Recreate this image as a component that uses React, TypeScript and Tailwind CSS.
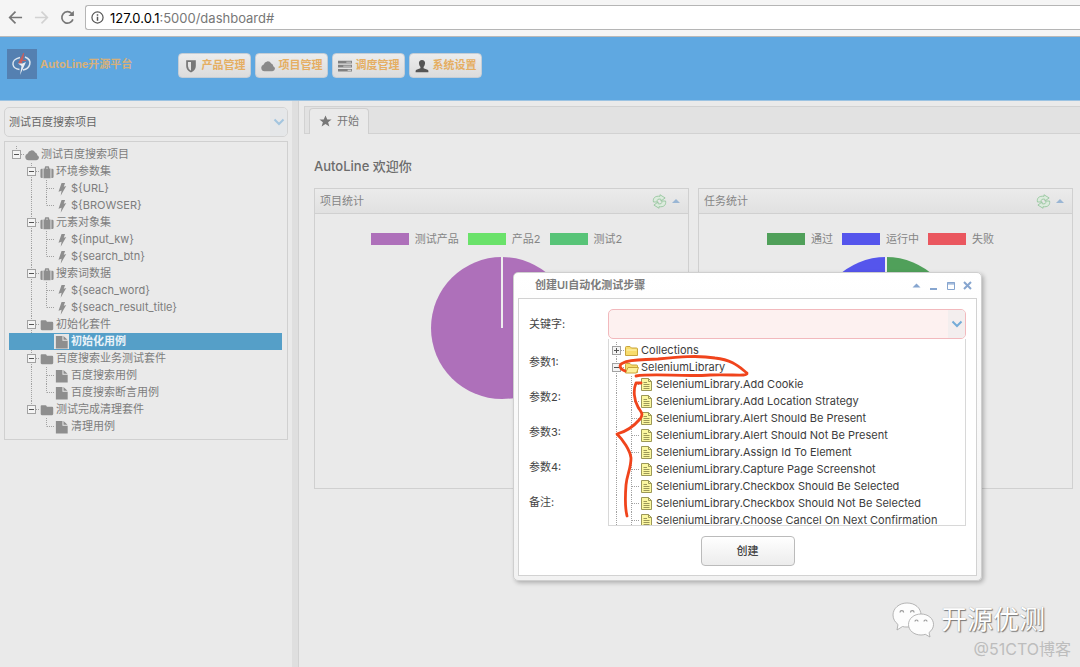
import React from "react";

type IconName = "cloud" | "case" | "bolt" | "folder" | "file" | "shield" | "tasks" | "user" | "star";

const glyphs: Record<IconName, React.ReactNode> = {
  cloud: <path d="M4 14a4 4 0 0 1-.9-7.8A4.7 4.7 0 0 1 11.7 5 3.2 3.2 0 0 1 14 8.200 3 3 0 0 1 13 14z" />,
  case: (
    <>
      <path d="M4 4h1.500V2.500Q5.500 1.500 6.500 1.500h3Q10.500 1.500 10.500 2.500V4H12v11H4zM7 3v1h2V3z" fillRule="evenodd" />
      <path d="M3 4.200v10.600H2Q.500 14.800.500 13.300V5.700Q.500 4.200 2 4.200zM13 4.200v10.600h1Q15.500 14.800 15.500 13.300V5.700Q15.500 4.200 14 4.200z" />
    </>
  ),
  bolt: <path d="M7.500 1h4L10 5.500l2.800-.8L6.500 15.700l1-5.600-3.500 1z" />,
  folder: <path d="M.800 3.500Q.800 2.500 1.800 2.500h4.400q1 0 1.300 1l.3.900h6q1.300 0 1.300 1.300v7q0 1.300-1.300 1.300H2.100Q.800 14 .800 12.700z" />,
  file: <path d="M1 1H8.500v5.500h6V15.500H1zM9.700 1l4.600 4.400H9.700z" />,
  shield: <path d="M2.500 1.500h11V8q0 4.700-5.500 7.500Q2.500 12.700 2.500 8zm2 1.800V8q0 3.300 3.500 5.300V3.300z" fillRule="evenodd" />,
  tasks: (
    <path
      d="M0 2h16v3H0zM0 6.700h16v3H0zM0 11.400h16v3H0zM9.500 3v1h5.500V3zM6 7.700v1h9v-1zM11 12.400v1h4v-1z"
      fillRule="evenodd"
    />
  ),
  user: <path d="M8 1c2.300 0 3.600 1.500 3.500 3.700C11.400 7 10.500 8.300 9.800 9v1.500l4.500 1.800q1 .4 1 1.400V15H.700v-1.300q0-1 1-1.400l4.500-1.800V9C5.500 8.300 4.600 7 4.500 4.700 4.400 2.500 5.700 1 8 1z" />,
  star: <path d="M8 .500l2.200 5h5.300l-4.300 3.300 1.600 5.400L8 11l-4.800 3.200 1.600-5.400L.500 5.500h5.300z" />,
};

function Icon({ name, className = "" }: { name: IconName; className?: string }) {
  return (
    <svg viewBox="0 0 16 16" fill="currentColor" aria-hidden="true" className={`shrink-0 ${className}`}>
      {glyphs[name]}
    </svg>
  );
}

type LineKind = "none" | "line" | "tee" | "end" | "open" | "openEnd" | "openRoot" | "closed";

function Cell({ kind }: { kind: LineKind }) {
  const box = kind === "open" || kind === "openEnd" || kind === "openRoot" || kind === "closed";
  const below = kind === "line" || kind === "tee" || kind === "open" || kind === "closed";
  return (
    <svg viewBox="0 0 15 17" aria-hidden="true" className="h-[17px] w-[15px] shrink-0 text-[#a2a2a2]">
      {kind !== "none" && (
        <g stroke="currentColor" strokeDasharray="1 1" fill="none">
          <path d={below ? "M7.500 0V17" : "M7.500 0V8.500"} />
          {kind !== "line" && <path d="M8 8.500H15" />}
        </g>
      )}
      {box && (
        <g stroke="currentColor" fill="#f4f4f4">
          <rect x="3.500" y="4.500" width="8" height="8" />
          <path d="M5 8.500H10" stroke="#555" />
          {kind === "closed" && <path d="M7.500 6V11" stroke="#555" />}
        </g>
      )}
    </svg>
  );
}

type Row = { cells: LineKind[]; icon: IconName; text: string; selected?: boolean };

const projectRows: Row[] = [
  { cells: ["openRoot"], icon: "cloud", text: "测试百度搜索项目" },
  { cells: ["none", "open"], icon: "case", text: "环境参数集" },
  { cells: ["none", "line", "tee"], icon: "bolt", text: "${URL}" },
  { cells: ["none", "line", "end"], icon: "bolt", text: "${BROWSER}" },
  { cells: ["none", "open"], icon: "case", text: "元素对象集" },
  { cells: ["none", "line", "tee"], icon: "bolt", text: "${input_kw}" },
  { cells: ["none", "line", "end"], icon: "bolt", text: "${search_btn}" },
  { cells: ["none", "open"], icon: "case", text: "搜索词数据" },
  { cells: ["none", "line", "tee"], icon: "bolt", text: "${seach_word}" },
  { cells: ["none", "line", "end"], icon: "bolt", text: "${seach_result_title}" },
  { cells: ["none", "open"], icon: "folder", text: "初始化套件" },
  { cells: ["none", "line", "end"], icon: "file", text: "初始化用例", selected: true },
  { cells: ["none", "open"], icon: "folder", text: "百度搜索业务测试套件" },
  { cells: ["none", "line", "tee"], icon: "file", text: "百度搜索用例" },
  { cells: ["none", "line", "end"], icon: "file", text: "百度搜索断言用例" },
  { cells: ["none", "openEnd"], icon: "folder", text: "测试完成清理套件" },
  { cells: ["none", "none", "end"], icon: "file", text: "清理用例" },
];

const keywords = [
  "Add Cookie",
  "Add Location Strategy",
  "Alert Should Be Present",
  "Alert Should Not Be Present",
  "Assign Id To Element",
  "Capture Page Screenshot",
  "Checkbox Should Be Selected",
  "Checkbox Should Not Be Selected",
  "Choose Cancel On Next Confirmation",
];

function Chevron({ className = "" }: { className?: string }) {
  return (
    <svg viewBox="0 0 12 12" fill="none" stroke="currentColor" strokeWidth="2" aria-hidden="true" className={`size-3 ${className}`}>
      <path d="M1.500 3.500L6 8l4.500-4.500" />
    </svg>
  );
}

function BrowserBar() {
  return (
    <div className="flex h-[37px] items-center border-b border-[#b9b9b9] bg-[#f5f5f5] pb-px pl-2">
      <div className="flex items-center gap-[11px]">
        <button aria-label="Back" className="text-[#777]">
          <svg viewBox="0 0 16 16" fill="none" stroke="currentColor" strokeWidth="1.800" className="size-[15px]">
            <path d="M15 8H2M8 1.800L1.800 8 8 14.200" />
          </svg>
        </button>
        <button aria-label="Forward" className="text-[#d2d2d2]">
          <svg viewBox="0 0 16 16" fill="none" stroke="currentColor" strokeWidth="1.800" className="size-[15px]">
            <path d="M1 8h13M8 1.800L14.200 8 8 14.200" />
          </svg>
        </button>
        <button aria-label="Reload" className="text-[#777]">
          <svg viewBox="0 0 16 16" fill="none" stroke="currentColor" strokeWidth="1.800" className="size-[15px]">
            <path d="M13.800 10A6.100 6.100 0 1 1 12.500 3.700L14 5.200" />
            <path d="M14.800.800V6.500H9z" fill="currentColor" stroke="none" />
          </svg>
        </button>
      </div>
      <div className="ml-[10px] flex h-[25px] flex-1 items-center gap-[6px] rounded-l-[3px] border border-r-0 border-[#b5b5b5] bg-white pl-[5px]">
        <svg viewBox="0 0 14 14" fill="none" stroke="#555" strokeWidth="1.300" aria-hidden="true" className="size-[13px]">
          <circle cx="7" cy="7" r="6" />
          <path d="M7 6.200V10.500M7 3.500V5" strokeWidth="1.600" />
        </svg>
        <p className="text-[13px] leading-5 text-[#777]">
          <span className="text-black">127.0.0.1</span>:5000/dashboard#
        </p>
      </div>
    </div>
  );
}

const navItems: { icon: IconName; text: string; tone: string }[] = [
  { icon: "shield", text: "产品管理", tone: "text-[#777]" },
  { icon: "cloud", text: "项目管理", tone: "text-[#8a8a8a]" },
  { icon: "tasks", text: "调度管理", tone: "text-[#808080]" },
  { icon: "user", text: "系统设置", tone: "text-[#555]" },
];

function Header() {
  return (
    <header className="flex h-16 items-center border-b border-[#9cc3e2] bg-[#5fa8e1] pb-[9px] pl-[7px]">
      <svg viewBox="0 0 30 30" fill="none" aria-hidden="true" className="size-[30px]">
        <rect width="30" height="30" fill="#5480b1" />
        <path d="M13 8.500C8 9.500 5.500 12.500 6 15.500c.4 2.500 3 4.500 6.500 5M18 8c4 1.500 5.500 4.500 4.700 7.500-.7 2.700-3 4.700-6.700 5.500" stroke="#dce6f0" strokeWidth="1.500" />
        <path d="M16.500 4L11 14.500h4z" fill="#c95f5c" />
        <path d="M11 14.500h4.500l3.500-1.500-6 13 1.500-9z" fill="#e8edf3" />
        <path d="M16.500 4l-1 7.500h3.500" stroke="#c95f5c" />
      </svg>
      <h1 className="ml-[3px] w-[138px] text-[11px] font-bold text-[#d5b07c]">AutoLine开源平台</h1>
      <nav className="flex gap-1 pt-[3px]">
        {navItems.map((n) => (
          <button
            key={n.text}
            className="flex h-[25px] w-[73px] items-center justify-center gap-1 rounded-[4px] border border-[#c4cdd6] bg-linear-to-b from-[#ececec] to-[#dcdcdc] text-[11px] font-semibold text-[#e5ae62]"
          >
            <Icon name={n.icon} className={`size-[14px] ${n.tone}`} />
            {n.text}
          </button>
        ))}
      </nav>
    </header>
  );
}

function Sidebar() {
  return (
    <aside className="w-[292px] shrink-0 py-[6px] pr-1 pl-1">
      <div className="relative flex">
        <select
          aria-label="项目"
          defaultValue="p"
          className="h-[30px] w-full appearance-none rounded-[5px] border border-[#d3d3d3] bg-[#eaeaea] px-1 text-[11px] text-[#666]"
        >
          <option value="p">测试百度搜索项目</option>
        </select>
        <span className="pointer-events-none absolute inset-y-px right-px flex w-[17px] items-center justify-center rounded-r-[4px] bg-[#e5e7e9]">
          <Chevron className="text-[#a3c5df]" />
        </span>
      </div>
      <ul role="tree" className="mt-1 border border-[#d0d0d0] py-1 pr-[5px] pl-1">
        {projectRows.map((r, i) => (
          <li
            key={i}
            role="treeitem"
            aria-selected={!!r.selected}
            className={`flex h-[17px] items-center text-[11px] leading-[17px] ${
              r.selected ? "bg-[#559fc8] font-bold text-[#eaf3f8]" : "text-[#7d7d7d]"
            }`}
          >
            {r.cells.map((c, j) => (
              <Cell key={j} kind={r.selected ? "none" : c} />
            ))}
            <span
              className={`mr-[2px] flex h-[15px] w-[15px] shrink-0 items-center justify-center text-[#8e8e8e] ${
                r.selected ? "bg-[#e6e6e6]" : ""
              }`}
            >
              <Icon name={r.icon} className="size-[14px]" />
            </span>
            {r.text}
          </li>
        ))}
      </ul>
    </aside>
  );
}

type Legend = { label: string; swatch: string };

function ChartPanel({ title, legend, children }: { title: string; legend: Legend[]; children: React.ReactNode }) {
  return (
    <section className="h-[301px] min-w-0 flex-1 border border-[#d0d0d0]">
      <div className="flex h-[25px] items-center border-b border-[#d0d0d0] bg-linear-to-b from-[#ebebeb] to-[#e1e1e1] pr-2 pl-[5px]">
        <h3 className="flex-1 text-[11px] text-[#858585]">{title}</h3>
        <button aria-label="刷新" className="mr-[5px]">
          <svg viewBox="0 0 16 16" fill="#dcebdd" stroke="#9ac8a1" strokeLinejoin="round" className="size-[15px]">
            <path d="M1.500 8.500C.8 4 3.500 1.800 8.500 2.500V.800L14 4.200 9.500 7.500V5.600C6.500 5 5.200 5.800 5.500 8.500z" />
            <path d="M14.500 7.500c.7 4.500-2 6.700-7 6v1.700L2 11.800l4.500-3.300v1.900c3 .6 4.300-.2 4-2.900z" />
          </svg>
        </button>
        <button aria-label="折叠">
          <svg viewBox="0 0 8 5" fill="#9ab6d4" className="h-[5px] w-2">
            <path d="M4 0L8 4H0z" />
          </svg>
        </button>
      </div>
      <ul className="mt-[19px] flex justify-center gap-[9px] pr-[10px] text-[11px] leading-[12px] text-[#858585]">
        {legend.map((l) => (
          <li key={l.label} className="flex items-center gap-[6px]">
            <span className={`h-3 w-[38px] ${l.swatch}`} />
            {l.label}
          </li>
        ))}
      </ul>
      <div className="mt-3 flex justify-center">{children}</div>
    </section>
  );
}

function MainArea() {
  return (
    <main className="min-w-0 flex-1 border-l border-[#d2d2d2] pt-[5px] pl-[5px]">
      <div className="flex h-[28px] items-end border border-r-0 border-[#d2d2d2] bg-[#e2e2e2] pl-1">
        <button className="-mb-px flex h-[26px] w-[60px] items-center justify-center gap-[5px] rounded-t-[4px] border border-b-0 border-[#cfcfcf] bg-[#eaeaea] text-[11px] text-[#777]">
          <Icon name="star" className="size-[13px]" />
          开始
        </button>
      </div>
      <div className="pr-[7px] pl-[10px]">
        <h2 className="pt-[21px] text-[13px] leading-[22px] font-medium text-[#6c6c6c]">AutoLine 欢迎你</h2>
        <div className="mt-[11px] flex gap-[9px]">
          <ChartPanel
            title="项目统计"
            legend={[
              { label: "测试产品", swatch: "bg-[#ae70ba]" },
              { label: "产品2", swatch: "bg-[#6ae26a]" },
              { label: "测试2", swatch: "bg-[#58c478]" },
            ]}
          >
            <svg viewBox="0 0 142 142" className="size-[142px]">
              <circle cx="71" cy="71" r="71" fill="#ae70ba" />
              <path d="M71 0V71" stroke="#eee" strokeWidth="2" />
            </svg>
          </ChartPanel>
          <ChartPanel
            title="任务统计"
            legend={[
              { label: "通过", swatch: "bg-[#50a05a]" },
              { label: "运行中", swatch: "bg-[#5555ec]" },
              { label: "失败", swatch: "bg-[#ea575f]" },
            ]}
          >
            <svg viewBox="0 0 142 142" className="size-[142px]">
              <path d="M71 0A71 71 0 0 1 71 142z" fill="#50a05a" />
              <path d="M71 0A71 71 0 0 0 71 142z" fill="#5555ec" />
              <path d="M71 0V142" stroke="#eee" strokeWidth="2" />
            </svg>
          </ChartPanel>
        </div>
      </div>
    </main>
  );
}

function YellowFolder({ open }: { open?: boolean }) {
  return (
    <svg viewBox="0 0 15 15" stroke="#c8a53c" aria-hidden="true" className="mr-[2px] size-[15px] shrink-0">
      <path d="M1.500 12.500V4.500Q1.500 3.500 2.500 3.500H6L7.500 5H12.500Q13.500 5 13.500 6V12.500z" fill="#f8dc6c" />
      {open ? (
        <path d="M1.500 13L4 7.500H14.500L12.500 13z" fill="#fdf09c" />
      ) : (
        <path d="M2.500 7H12.500" stroke="#fff5b8" />
      )}
    </svg>
  );
}

function Note() {
  return (
    <svg viewBox="0 0 15 15" fill="none" aria-hidden="true" className="mr-[2px] size-[15px] shrink-0">
      <path d="M2.500 1.500H9.500L12.500 4.500V13.500H2.500z" fill="#fbf7a0" stroke="#9c9858" />
      <path d="M9.500 1.500V4.500H12.500" stroke="#9c9858" />
      <path d="M4.500 5.500H8M4.500 7.500H10.500M4.500 9.500H10.500M4.500 11.500H10.500" stroke="#9c9858" />
    </svg>
  );
}

const params = [
  { id: "p1", label: "参数1:" },
  { id: "p2", label: "参数2:" },
  { id: "p3", label: "参数3:" },
  { id: "p4", label: "参数4:" },
  { id: "remark", label: "备注:" },
];

function Dialog() {
  return (
    <div
      role="dialog"
      aria-label="创建UI自动化测试步骤"
      className="absolute top-[272px] left-[513px] w-[469px] rounded-[5px] border border-[#cfcfcf] bg-linear-to-b from-white to-[#f2f2f2] px-1 pb-1 shadow-[2px_2px_4px_rgba(0,0,0,0.25)]"
    >
      <div className="flex h-[25px] items-center pr-[3px] pl-[17px]">
        <h2 className="flex-1 text-[11px] font-semibold text-[#7c7c7c]">创建UI自动化测试步骤</h2>
        <div className="flex gap-1 text-[#86a5cf]">
          <button aria-label="折叠">
            <svg viewBox="0 0 13 13" fill="currentColor" className="size-[13px]"><path d="M6.500 4.500L10.500 8.500H2.500z" /></svg>
          </button>
          <button aria-label="最小化">
            <svg viewBox="0 0 13 13" fill="currentColor" className="size-[13px]"><path d="M3 9h7v2H3z" /></svg>
          </button>
          <button aria-label="最大化">
            <svg viewBox="0 0 13 13" fill="none" stroke="currentColor" className="size-[13px]"><path d="M3.500 3.500h7v7h-7zM3 4h8M3 5h8" /></svg>
          </button>
          <button aria-label="关闭">
            <svg viewBox="0 0 13 13" fill="none" stroke="currentColor" strokeWidth="2" className="size-[13px]"><path d="M3 3l7 7M10 3l-7 7" /></svg>
          </button>
        </div>
      </div>
      <form className="border border-[#d2d2d2] bg-white px-[10px] pt-[10px] pb-[9px] text-[11px] text-[#444]" onSubmit={(e) => e.preventDefault()}>
        <div className="flex items-center">
          <label htmlFor="kw" className="w-[79px] shrink-0">关键字:</label>
          <div className="relative flex flex-1">
            <input id="kw" className="h-[30px] w-full rounded-[5px] border border-[#f2b9bd] bg-[#fdf1f0] px-2" />
            <span className="pointer-events-none absolute inset-y-px right-px flex w-[17px] items-center justify-center rounded-r-[4px] bg-[#f3eeee]">
              <Chevron className="text-[#74acd8]" />
            </span>
            <ul role="tree" className="absolute inset-x-0 top-[30px] z-10 h-[187px] overflow-hidden border border-t-0 border-[#d8d8d8] bg-white pt-[3px] text-[#3c3c3c]">
              <li role="treeitem" className="flex h-[17px] items-center whitespace-nowrap">
                <Cell kind="closed" />
                <YellowFolder />
                Collections
              </li>
              <li role="treeitem" className="flex h-[17px] items-center whitespace-nowrap">
                <Cell kind="open" />
                <YellowFolder open />
                SeleniumLibrary
              </li>
              {keywords.map((k) => (
                <li key={k} role="treeitem" className="flex h-[17px] items-center whitespace-nowrap">
                  <Cell kind="line" />
                  <Cell kind="tee" />
                  <Note />
                  SeleniumLibrary.{k}
                </li>
              ))}
            </ul>
          </div>
        </div>
        <div className="pt-[6px]">
          {params.map((p) => (
            <div key={p.id} className="flex h-[35px] items-center">
              <label htmlFor={p.id} className="w-[79px] shrink-0">{p.label}</label>
              <input id={p.id} className="h-[30px] min-w-0 flex-1 rounded-[5px] border border-[#d8d8d8] px-2" />
            </div>
          ))}
        </div>
        <div className="flex justify-center pt-4">
          <button className="h-[30px] w-[94px] rounded-[4px] border border-[#bbb] bg-linear-to-b from-white to-[#ececec] font-medium text-[#444]">
            创建
          </button>
        </div>
      </form>
      <svg
        viewBox="0 0 140 170"
        fill="none"
        stroke="#f0441c"
        strokeWidth="2.800"
        strokeLinecap="round"
        strokeLinejoin="round"
        aria-hidden="true"
        className="pointer-events-none absolute top-[79px] left-[96px] z-20 h-[170px] w-[140px]"
      >
        <path d="M15 19C10 17 8 13 13 11 20 7 32 8 48 7 68 5 88 3 105 6 122 8 128 14 137 21 138 25 122 22 100 23 72 25 45 21 26 24" />
        <path d="M31 31H26C23 38 24 48 28 55 31 60 34 62 30 67 24 74 15 80 7 82 13 88 20 98 21 106 21 117 17 122 16 133 15 146 15 156 17 164" />
      </svg>
    </div>
  );
}

function Watermark() {
  return (
    <div className="pointer-events-none absolute right-[9px] bottom-[7px] flex flex-col items-end" aria-hidden="true">
      <div className="flex items-center gap-[7px] pr-[26px]">
        <svg viewBox="0 0 42 36" fill="#fdfdfd" stroke="#a5a5a5" strokeWidth="0.800" className="h-9 w-[42px]">
          <path d="M15 1C7 1 1 6.500 1 13c0 4 2 7 5 9.500L5 28l5.500-3.500c1.500.500 3 .500 4.500.500 8 0 14-5 14-12S23 1 15 1z" />
          <path d="M29 12c-7 0-12.500 4.500-12.500 10.500S22 33 29 33c1.500 0 3-.200 4.300-.7L38 35l-1-4.500c2.800-2 4.500-4.800 4.500-8C41.500 16.500 36 12 29 12z" />
          <g fill="none" stroke="#999" strokeWidth="1.200">
            <path d="M8 10.500a1.800 1.800 0 0 1 3.600 0M18.500 10.500a1.800 1.800 0 0 1 3.600 0M23 19.500a1.500 1.500 0 0 1 3 0M32 19.500a1.500 1.500 0 0 1 3 0" />
          </g>
        </svg>
        <span className="text-[26px] leading-9 text-white [text-shadow:1px_1px_1px_#777,0_0_1px_#999]">开源优测</span>
      </div>
      <span className="text-[16px] leading-[22px] text-[#bdbdbd]">@51CTO博客</span>
    </div>
  );
}

export default function App() {
  return (
    <div className="relative flex min-h-screen flex-col overflow-hidden bg-[#eaeaea] font-['Inter','Noto_Sans_CJK_SC',sans-serif]">
      <BrowserBar />
      <Header />
      <div className="flex flex-1">
        <Sidebar />
        <div className="w-[6px] shrink-0 bg-[#dfdfdf]" />
        <MainArea />
      </div>
      <Dialog />
      <Watermark />
    </div>
  );
}
